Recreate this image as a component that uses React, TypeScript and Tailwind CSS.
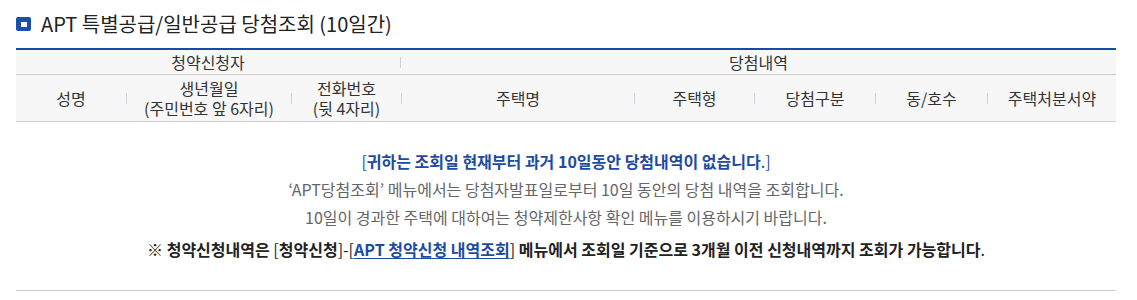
const FONT = { fontFamily: '"Noto Sans CJK KR", "Noto Sans", sans-serif' };

const cols = [
  { w: 110, lines: ['성명'] },
  { w: 165, lines: ['생년월일', '(주민번호 앞 6자리)'] },
  { w: 110, lines: ['전화번호', '(뒷 4자리)'] },
  { w: 233, lines: ['주택명'] },
  { w: 120, lines: ['주택형'] },
  { w: 121, lines: ['당첨구분'] },
  { w: 112, lines: ['동/호수'] },
  { w: 129, lines: ['주택처분서약'] },
];

function Divider() {
  return <span className="h-[11px] w-px shrink-0 self-center bg-[#c9d1e3]" />;
}

export default function App() {
  return (
    <div className="min-h-[300px] bg-white text-[#222]" style={FONT}>
      <div className="ml-4 w-[1100px] pt-3">
        <h2 className="mb-3 flex h-6 items-center gap-[10px] text-[20px] font-normal leading-6 text-[#222]">
          <span className="flex h-[14px] w-[15px] items-center justify-center rounded-[2px] bg-[#1a4fad]">
            <span className="h-[5px] w-[6px] bg-white" />
          </span>
          APT 특별공급/일반공급 당첨조회 (10일간)
        </h2>

        <div className="border-t-2 border-[#1a4aa6] bg-[#f7f7f7] text-[16px] text-[#333]">
          <div className="flex h-[25px] items-center border-b border-[#cccccc]">
            <div className="w-[384px] text-center leading-[24px]">청약신청자</div>
            <Divider />
            <div className="flex-1 text-center leading-[24px]">당첨내역</div>
          </div>
          <div className="flex h-[47px] items-center border-b border-[#cccccc]">
            {cols.map((c, i) => (
              <div key={c.lines[0]} className="flex h-full items-center" style={{ width: c.w }}>
                {i > 0 && <Divider />}
                <div className="flex-1 text-center leading-[20px]">
                  {c.lines.map((l) => (
                    <div key={l}>{l}</div>
                  ))}
                </div>
              </div>
            ))}
          </div>
        </div>

        <div className="border-b border-[#cccccc] pb-[27px] pt-[25px] text-center text-[16px] leading-[28px]">
          <p className="text-[#1d4ba0]">
            [<b className="font-bold">귀하는 조회일 현재부터 과거 10일동안 당첨내역이 없습니다</b>.]
          </p>
          <p className="text-[#666]">‘APT당첨조회’ 메뉴에서는 당첨자발표일로부터 10일 동안의 당첨 내역을 조회합니다.</p>
          <p className="text-[#666]">10일이 경과한 주택에 대하여는 청약제한사항 확인 메뉴를 이용하시기 바랍니다.</p>
          <p className="mt-1 text-[#222]">
            <b className="font-bold">※ 청약신청내역은 </b>[<b className="font-bold">청약신청</b>]-[
            <a className="font-bold text-[#1d4ba0] underline underline-offset-2">APT 청약신청 내역조회</a>]
            <b className="font-bold"> 메뉴에서 조회일 기준으로 3개월 이전 신청내역까지 조회가 가능합니다</b>.
          </p>
        </div>
      </div>
    </div>
  );
}
